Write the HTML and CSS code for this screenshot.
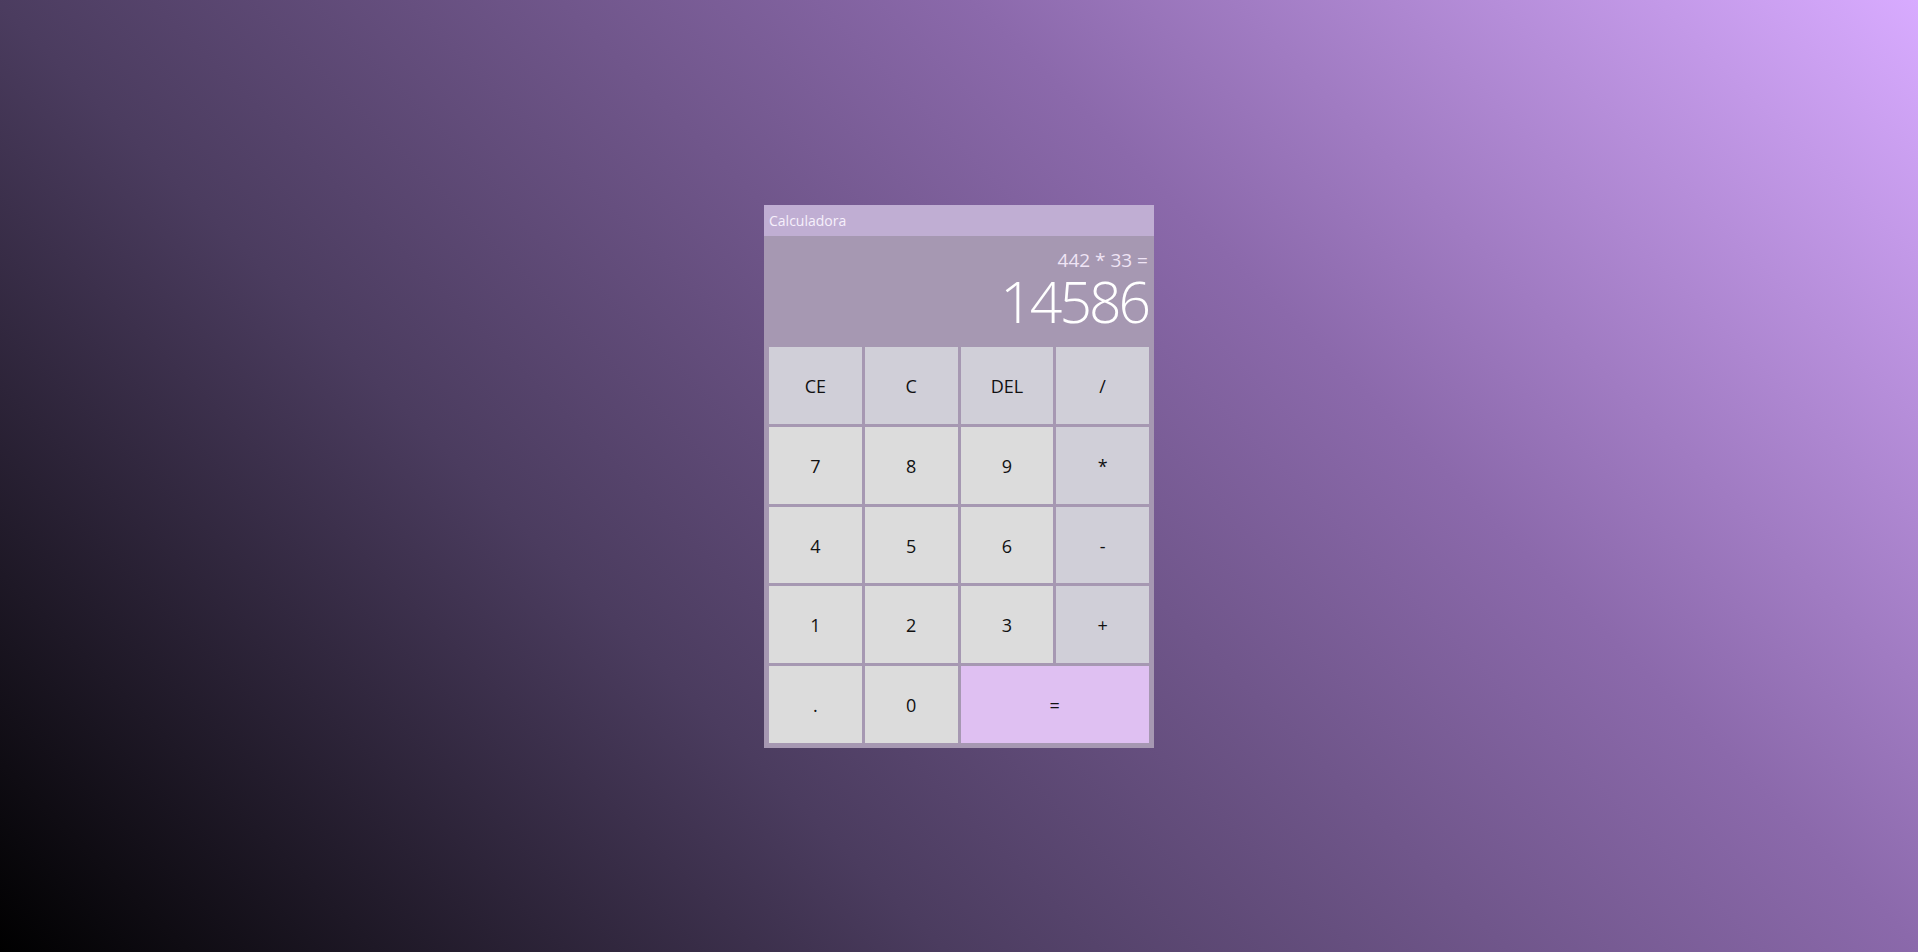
FILE: index.html
```html
<!DOCTYPE html>
<html lang="es">
<head>
<meta charset="utf-8">
<title>Calculadora</title>
<link rel="stylesheet" href="styles.css">
</head>
<body>
  <div class="window">
    <div class="titlebar">Calculadora</div>
    <div class="display">
      <div class="expr">442 * 33 =</div>
      <div class="result">14586</div>
    </div>
    <div class="keys">
      <button class="key op">CE</button>
      <button class="key op">C</button>
      <button class="key op">DEL</button>
      <button class="key op">/</button>
      <button class="key">7</button>
      <button class="key">8</button>
      <button class="key">9</button>
      <button class="key op">*</button>
      <button class="key">4</button>
      <button class="key">5</button>
      <button class="key">6</button>
      <button class="key op">-</button>
      <button class="key">1</button>
      <button class="key">2</button>
      <button class="key">3</button>
      <button class="key op">+</button>
      <button class="key">.</button>
      <button class="key">0</button>
      <button class="key eq">=</button>
    </div>
  </div>
</body>
</html>
```

FILE: styles.css
```css
html, body {
  margin: 0;
  height: 100%;
}
body {
  background: linear-gradient(45deg, #000000 0%, #4b3c5f 33%, #8b69ab 67%, #d8abff 100%);
  display: flex;
  align-items: center;
  justify-content: center;
  font-family: "Open Sans", "Noto Sans", sans-serif;
}
.window {
  width: 390px;
  background: #a698b2;
  display: flex;
  flex-direction: column;
}
.titlebar {
  height: 31px;
  box-sizing: border-box;
  padding: 1px 0 0 5px;
  background: #c0aed3;
  color: #f6f0fb;
  font-size: 14px;
  line-height: 30px;
}
.display {
  height: 106px;
  padding: 0 6px;
  display: flex;
  flex-direction: column;
  align-items: flex-end;
  color: #ffffff;
}
.expr {
  margin-top: 13px;
  font-size: 19px;
  line-height: 22px;
  color: #efe4f5;
}
.result {
  font-size: 57px;
  font-weight: 300;
  line-height: 60px;
  letter-spacing: -3px;
  padding-right: 3px;
  margin-right: -3px;
}
.keys {
  display: grid;
  grid-template-columns: repeat(4, 1fr);
  grid-template-rows: 77px 77px 76px 77px 77px;
  gap: 3px;
  padding: 5px;
}
.key {
  border: none;
  margin: 0;
  padding: 2px 0 0 0;
  background: #dcdcdc;
  color: #111111;
  font-family: "Open Sans", "Noto Sans", sans-serif;
  font-size: 18px;
}
.key.op {
  background: #d0cfd8;
}
.key.eq {
  grid-column: span 2;
  background: #dfc0f2;
}
```
